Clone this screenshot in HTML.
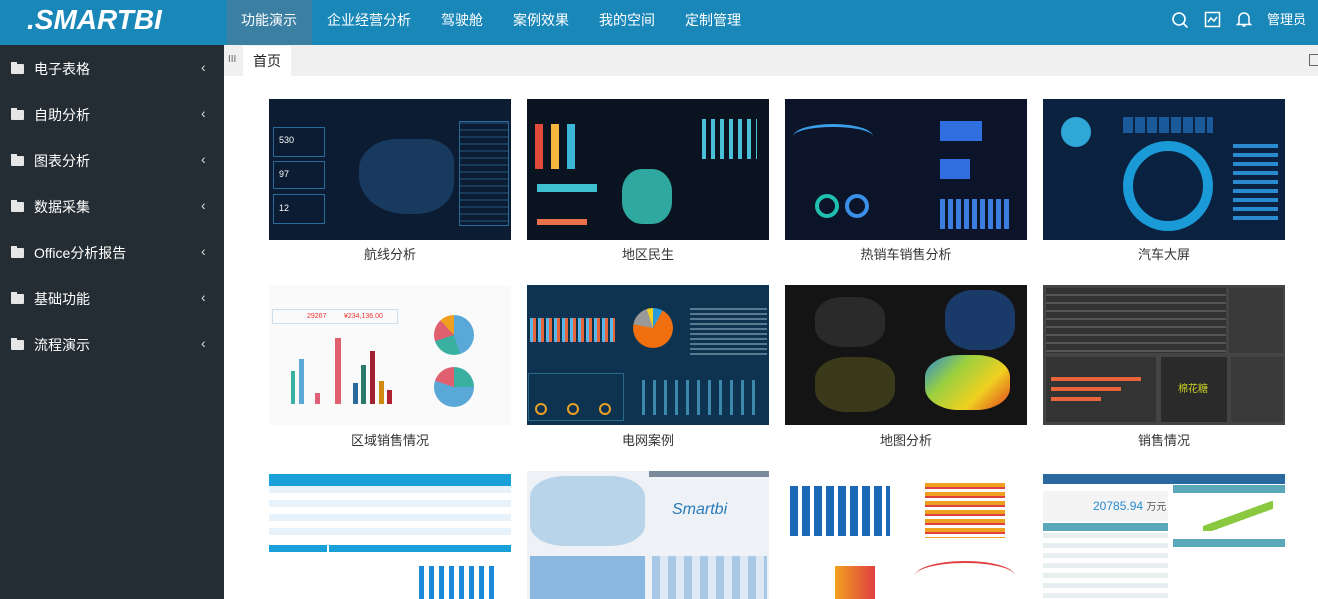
<!DOCTYPE html>
<html><head><meta charset="utf-8"><style>
*{margin:0;padding:0;box-sizing:border-box}
body{width:1318px;height:599px;overflow:hidden;font-family:"Liberation Sans","Noto Sans CJK SC",sans-serif;background:#fff;position:relative}
.hdr{position:absolute;left:0;top:0;width:1318px;height:45px;background:#1a87b9}
.logo{position:absolute;left:27px;top:4px;color:#fff;font:italic bold 28px "Liberation Sans",sans-serif}
.nav{position:absolute;top:0;height:45px;line-height:40px;color:#fff;font-size:14px}
.nav.act{background:#3b7fa3}
.side{position:absolute;left:0;top:45px;width:224px;height:554px;background:#232d33}
.si{position:absolute;left:0;width:224px;height:46px;color:#fff;font-size:14px}
.si .f{position:absolute;left:11px;top:19px;width:13px;height:10px;background:#e6e6e6;border-radius:1px}
.si .f:before{content:"";position:absolute;left:0;top:-2px;width:6px;height:3px;background:#e6e6e6}
.si .t{position:absolute;left:34px;top:14px}
.si .c{position:absolute;left:201px;top:14px;font-size:14px;color:#ddd}
.tabbar{position:absolute;left:224px;top:45px;width:1094px;height:31px;background:#f0f0f0}
.tab{position:absolute;left:243px;top:46px;width:48px;height:30px;background:#fff;font-size:14px;line-height:30px;text-align:center;color:#222}
.card{position:absolute;width:242px;overflow:hidden}
.lbl{position:absolute;width:242px;text-align:center;font-size:13px;color:#333}
.b{position:absolute}
</style></head><body>
<div class="hdr">
<div class="logo">.SMARTBI</div>
<div class="nav act" style="left:227px;width:85px;padding-left:14px">功能演示</div>
<div class="nav" style="left:327px">企业经营分析</div>
<div class="nav" style="left:441px">驾驶舱</div>
<div class="nav" style="left:513px">案例效果</div>
<div class="nav" style="left:599px">我的空间</div>
<div class="nav" style="left:685px">定制管理</div>
<svg style="position:absolute;left:1170px;top:10px" width="20" height="20" fill="none" stroke="#fff" stroke-width="1.6"><circle cx="9" cy="9" r="6"/><path d="M13.5 13.5l4 4"/></svg>
<svg style="position:absolute;left:1204px;top:11px" width="18" height="18" fill="none" stroke="#fff" stroke-width="1.5"><rect x="1.5" y="1.5" width="14" height="14"/><path d="M4 11l3-4 3 3 3-4"/></svg>
<svg style="position:absolute;left:1236px;top:10px" width="16" height="18" fill="none" stroke="#fff" stroke-width="1.5"><path d="M3 13V8a5 5 0 0110 0v5l1.5 1.5h-13z"/><path d="M6.5 16h3"/></svg>
<div class="nav" style="left:1267px;font-size:13px">管理员 ﹀</div>
</div>
<div class="side">
<div class="si" style="top:0"><i class="f"></i><span class="t">电子表格</span><span class="c">‹</span></div>
<div class="si" style="top:46px"><i class="f"></i><span class="t">自助分析</span><span class="c">‹</span></div>
<div class="si" style="top:92px"><i class="f"></i><span class="t">图表分析</span><span class="c">‹</span></div>
<div class="si" style="top:138px"><i class="f"></i><span class="t">数据采集</span><span class="c">‹</span></div>
<div class="si" style="top:184px"><i class="f"></i><span class="t">Office分析报告</span><span class="c">‹</span></div>
<div class="si" style="top:230px"><i class="f"></i><span class="t">基础功能</span><span class="c">‹</span></div>
<div class="si" style="top:276px"><i class="f"></i><span class="t">流程演示</span><span class="c">‹</span></div>
</div>
<div class="tabbar"></div>
<div style="position:absolute;left:228px;top:54px;font-size:10px;color:#666">III</div>
<div class="tab">首页</div>
<div style="position:absolute;left:1309px;top:54px;width:12px;height:12px;border:1px solid #666"></div>

<!-- row1 -->
<div class="card" style="left:269px;top:99px;height:141px;background:#0b1c33">
<div class="b" style="left:4px;top:28px;width:52px;height:30px;border:1px solid #2a6a9a"></div>
<div class="b" style="left:10px;top:36px;font-size:9px;color:#fff">530</div>
<div class="b" style="left:4px;top:62px;width:52px;height:28px;border:1px solid #2a6a9a"></div>
<div class="b" style="left:10px;top:70px;font-size:9px;color:#fff">97</div>
<div class="b" style="left:4px;top:95px;width:52px;height:30px;border:1px solid #2a6a9a"></div>
<div class="b" style="left:10px;top:104px;font-size:9px;color:#fff">12</div>
<div class="b" style="left:90px;top:40px;width:95px;height:75px;background:#173a5e;border-radius:40% 30% 40% 50%"></div>
<div class="b" style="left:190px;top:22px;width:50px;height:105px;border:1px solid #2a6a9a;background:repeating-linear-gradient(180deg,#1a3a5a 0 2px,transparent 2px 7px)"></div>
</div>
<div class="lbl" style="left:269px;top:244px">航线分析</div>
<div class="card" style="left:527px;top:99px;height:141px;background:#0a1420">
<div class="b" style="left:8px;top:25px;width:40px;height:45px;background:linear-gradient(90deg,#e14b3b 0 20%,transparent 20% 40%,#f6b73c 40% 60%,transparent 60% 80%,#3bb6d6 80%)"></div>
<div class="b" style="left:95px;top:70px;width:50px;height:55px;background:#2fa8a0;border-radius:40%"></div>
<div class="b" style="left:175px;top:20px;width:55px;height:40px;background:repeating-linear-gradient(90deg,#48c0d8 0 4px,transparent 4px 9px)"></div>
<div class="b" style="left:10px;top:85px;width:60px;height:8px;background:#3ec0d0"></div>
<div class="b" style="left:10px;top:120px;width:50px;height:6px;background:#e8714a"></div>
</div>
<div class="lbl" style="left:527px;top:244px">地区民生</div>
<div class="card" style="left:785px;top:99px;height:141px;background:#0b1428">
<div class="b" style="left:8px;top:25px;width:80px;height:25px;border-top:3px solid #3a9fe8;border-radius:50% 50% 0 0"></div>
<div class="b" style="left:155px;top:22px;width:60px;height:20px;background:linear-gradient(90deg,#2f6fe0 70%,transparent 70%)"></div>
<div class="b" style="left:155px;top:60px;width:50px;height:20px;background:linear-gradient(90deg,#2f6fe0 60%,transparent 60%)"></div>
<div class="b" style="left:30px;top:95px;width:24px;height:24px;border:4px solid #20c0b0;border-radius:50%"></div>
<div class="b" style="left:60px;top:95px;width:24px;height:24px;border:4px solid #3a8fe8;border-radius:50%"></div>
<div class="b" style="left:155px;top:100px;width:70px;height:30px;background:repeating-linear-gradient(90deg,#3a7fe0 0 5px,transparent 5px 8px)"></div>
</div>
<div class="lbl" style="left:785px;top:244px">热销车销售分析</div>
<div class="card" style="left:1043px;top:99px;height:141px;background:#0a2240">
<div class="b" style="left:80px;top:18px;width:90px;height:16px;background:repeating-linear-gradient(90deg,#1a5a9a 0 10px,transparent 10px 12px)"></div>
<div class="b" style="left:80px;top:42px;width:90px;height:90px;border:10px solid #1a9ad6;border-radius:50%"></div>
<div class="b" style="left:18px;top:18px;width:30px;height:30px;background:#2fa8d8;border-radius:50%"></div>
<div class="b" style="left:190px;top:45px;width:45px;height:80px;background:repeating-linear-gradient(180deg,#2a8ad0 0 4px,transparent 4px 9px)"></div>
</div>
<div class="lbl" style="left:1043px;top:244px">汽车大屏</div>

<!-- row2 -->
<div class="card" style="left:269px;top:285px;height:140px;background:#fafafa">
<div class="b" style="left:3px;top:24px;width:126px;height:15px;border:1px solid #cde"></div>
<div class="b" style="left:38px;top:28px;font-size:7px;color:#e33">29267 &nbsp;&nbsp;&nbsp;&nbsp;&nbsp;&nbsp;&nbsp; ¥234,136.00</div>
<div class="b" style="left:22px;top:86px;width:4px;height:33px;background:#3ab0a0"></div>
<div class="b" style="left:30px;top:74px;width:5px;height:45px;background:#5aa8d8"></div>
<div class="b" style="left:46px;top:108px;width:5px;height:11px;background:#e0607a"></div>
<div class="b" style="left:66px;top:53px;width:6px;height:66px;background:#e06070"></div>
<div class="b" style="left:84px;top:98px;width:5px;height:21px;background:#2a6a9a"></div>
<div class="b" style="left:92px;top:80px;width:5px;height:39px;background:#2a7a6a"></div>
<div class="b" style="left:101px;top:66px;width:5px;height:53px;background:#a02030"></div>
<div class="b" style="left:110px;top:96px;width:5px;height:23px;background:#d08a10"></div>
<div class="b" style="left:118px;top:105px;width:5px;height:14px;background:#b02030"></div>
<div class="b" style="left:165px;top:30px;width:40px;height:40px;background:conic-gradient(#5aa8d8 0 45%,#3ab0a0 45% 70%,#e06070 70% 88%,#f0a020 88%);border-radius:50%"></div>
<div class="b" style="left:165px;top:82px;width:40px;height:40px;background:conic-gradient(#3ab0a0 0 25%,#5aa8d8 25% 80%,#e06070 80%);border-radius:50%"></div>
</div>
<div class="lbl" style="left:269px;top:430px">区域销售情况</div>
<div class="card" style="left:527px;top:285px;height:140px;background:#0d3350">
<div class="b" style="left:3px;top:33px;width:85px;height:24px;background:repeating-linear-gradient(90deg,#5ab8e8 0 3px,#e8643a 3px 6px,transparent 6px 8px)"></div>
<div class="b" style="left:106px;top:23px;width:40px;height:40px;background:conic-gradient(#2a9ad8 0 8%,#f07010 8% 78%,#999 78% 95%,#f0d020 95%);border-radius:50%"></div>
<div class="b" style="left:163px;top:23px;width:77px;height:48px;background:repeating-linear-gradient(180deg,#8ab 0 2px,transparent 2px 5px);opacity:.6"></div>
<div class="b" style="left:1px;top:88px;width:96px;height:48px;border:1px solid #2a6a8a"></div>
<div class="b" style="left:8px;top:118px;width:12px;height:12px;border:2px solid #e8a020;border-radius:50%"></div>
<div class="b" style="left:40px;top:118px;width:12px;height:12px;border:2px solid #e8a020;border-radius:50%"></div>
<div class="b" style="left:72px;top:118px;width:12px;height:12px;border:2px solid #e8a020;border-radius:50%"></div>
<div class="b" style="left:115px;top:95px;width:120px;height:35px;background:repeating-linear-gradient(90deg,#5ac0e8 0 3px,transparent 3px 11px);opacity:.6"></div>
</div>
<div class="lbl" style="left:527px;top:430px">电网案例</div>
<div class="card" style="left:785px;top:285px;height:140px;background:#141414">
<div class="b" style="left:30px;top:12px;width:70px;height:50px;background:#2a2a2a;border-radius:40%"></div>
<div class="b" style="left:160px;top:5px;width:70px;height:60px;background:#1a3a6a;border-radius:40%"></div>
<div class="b" style="left:30px;top:72px;width:80px;height:55px;background:#3a3a1a;border-radius:40%"></div>
<div class="b" style="left:140px;top:70px;width:85px;height:55px;background:linear-gradient(135deg,#2a8ad0,#9ad040,#f0d020,#e04020);border-radius:40%"></div>
</div>
<div class="lbl" style="left:785px;top:430px">地图分析</div>
<div class="card" style="left:1043px;top:285px;height:140px;background:#444">
<div class="b" style="left:3px;top:3px;width:180px;height:65px;background:repeating-linear-gradient(180deg,#333 0 6px,#555 6px 8px)"></div>
<div class="b" style="left:186px;top:3px;width:54px;height:65px;background:#3a3a3a"></div>
<div class="b" style="left:3px;top:72px;width:110px;height:65px;background:#333"></div>
<div class="b" style="left:8px;top:92px;width:90px;height:4px;background:#e8643a"></div>
<div class="b" style="left:8px;top:102px;width:70px;height:4px;background:#e8643a"></div>
<div class="b" style="left:8px;top:112px;width:50px;height:4px;background:#e8643a"></div>
<div class="b" style="left:118px;top:72px;width:66px;height:65px;background:#2a2a2a"></div>
<div class="b" style="left:135px;top:95px;font-size:10px;color:#c8d020">棉花糖</div>
<div class="b" style="left:188px;top:72px;width:52px;height:65px;background:#3a3a3a"></div>
</div>
<div class="lbl" style="left:1043px;top:430px">销售情况</div>

<!-- row3 -->
<div class="card" style="left:269px;top:471px;height:128px;background:#fff">
<div class="b" style="left:0;top:3px;width:242px;height:12px;background:#1aa0d8"></div>
<div class="b" style="left:0;top:15px;width:242px;height:55px;background:repeating-linear-gradient(180deg,#e8f2fa 0 7px,#fff 7px 14px)"></div>
<div class="b" style="left:60px;top:74px;width:182px;height:7px;background:#1aa0d8"></div>
<div class="b" style="left:0;top:74px;width:58px;height:7px;background:#1aa0d8"></div>
<div class="b" style="left:150px;top:95px;width:80px;height:33px;background:repeating-linear-gradient(90deg,#1a8ad8 0 5px,transparent 5px 10px)"></div>
</div>
<div class="card" style="left:527px;top:471px;height:128px;background:#eef2f6">
<div class="b" style="left:3px;top:5px;width:115px;height:70px;background:#b8d4ea;border-radius:30%"></div>
<div class="b" style="left:122px;top:0;width:120px;height:6px;background:#7a8a9a"></div>
<div class="b" style="left:145px;top:30px;font-size:16px;color:#2a7ab8;font-style:italic">Smartbi</div>
<div class="b" style="left:3px;top:85px;width:115px;height:43px;background:#8ab8e0"></div>
<div class="b" style="left:125px;top:85px;width:115px;height:43px;background:repeating-linear-gradient(90deg,#a8c8e8 0 8px,#dde8f4 8px 16px)"></div>
</div>
<div class="card" style="left:785px;top:471px;height:128px;background:#fff">
<div class="b" style="left:5px;top:15px;width:100px;height:50px;background:repeating-linear-gradient(90deg,#1a6ab8 0 8px,transparent 8px 12px)"></div>
<div class="b" style="left:140px;top:12px;width:80px;height:55px;background:repeating-linear-gradient(180deg,#f0a020 0 4px,#e04040 4px 6px,transparent 6px 9px)"></div>
<div class="b" style="left:50px;top:95px;width:40px;height:33px;background:linear-gradient(90deg,#f0a020,#e04040)"></div>
<div class="b" style="left:130px;top:90px;width:100px;height:30px;border-top:2px solid #e04040;border-radius:50%"></div>
</div>
<div class="card" style="left:1043px;top:471px;height:128px;background:#fff">
<div class="b" style="left:0;top:3px;width:242px;height:10px;background:#2a6aa0"></div>
<div class="b" style="left:0;top:20px;width:125px;height:30px;background:#f4f4f4"></div>
<div class="b" style="left:50px;top:27px;font-size:12px;color:#2a8ad0">20785.94 <span style="font-size:10px;color:#555">万元</span></div>
<div class="b" style="left:0;top:52px;width:125px;height:76px;background:repeating-linear-gradient(180deg,#e6eef0 0 5px,#fff 5px 10px)"></div>
<div class="b" style="left:0;top:52px;width:125px;height:8px;background:#5aa8b8"></div>
<div class="b" style="left:130px;top:14px;width:112px;height:8px;background:#5aa8b8"></div>
<div class="b" style="left:130px;top:68px;width:112px;height:8px;background:#5aa8b8"></div>
<div class="b" style="left:160px;top:30px;width:70px;height:30px;background:linear-gradient(160deg,transparent 45%,#8ac840 45% 60%,transparent 60%)"></div>
</div>
</body></html>
